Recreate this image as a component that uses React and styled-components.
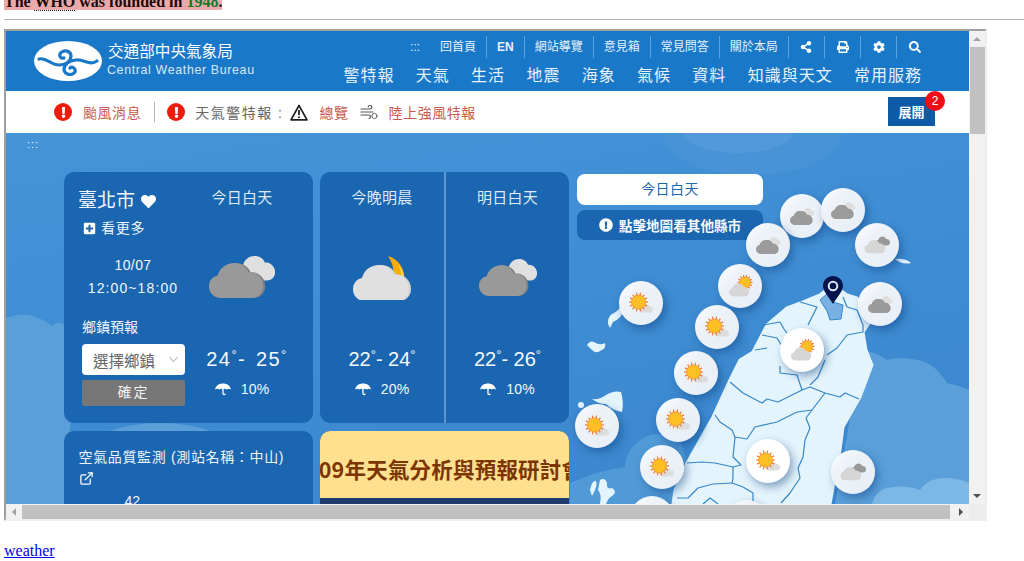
import React from "react";
import styled, { createGlobalStyle } from "styled-components";
import { FaShareAlt, FaPrint, FaCog, FaSearch, FaHeart, FaPlusSquare, FaExclamationCircle, FaExclamation } from "react-icons/fa";
import { FiExternalLink, FiChevronDown } from "react-icons/fi";

const SANS = `"Liberation Sans", "Noto Sans CJK TC", sans-serif`;

const Global = createGlobalStyle`
  html, body { margin: 0; padding: 0; background: #fff; overflow: hidden; }
  body { font-family: "Liberation Serif", serif; font-size: 16px; color: #000; }
`;

const Page = styled.div`
  width: 1024px;
  height: 561px;
  overflow: hidden;
  padding-left: 4px;
  box-sizing: border-box;
`;
const Fact = styled.p`
  margin: -7px 0 0;
  line-height: 18px;
  font-weight: 700;
  font-size: 16px;
`;
const Highlight = styled.span`
  background: #eba9a9;
  color: #1a0a0a;
`;
const Abbr = styled.span`
  border-bottom: 1px dotted #222;
`;
const Year = styled.span`
  color: #147a24;
`;
const Rule = styled.hr`
  margin: 8px 0 9px;
  border: 0;
  border-top: 1px solid #b4b4b4;
  height: 0;
`;
const Frame = styled.div`
  width: 983px;
  height: 492px;
  box-sizing: border-box;
  border: 2px solid;
  border-color: #a0a0a0 #efefef #efefef #a0a0a0;
  display: grid;
  grid-template-columns: 963px 16px;
  grid-template-rows: 473px 15px;
  font-family: ${SANS};
`;
const Viewport = styled.div`
  overflow: hidden;
  display: flex;
  flex-direction: column;
  background: #fff;
`;
const VBar = styled.div`
  background: #f1f1f1;
  display: flex;
  flex-direction: column;
  align-items: center;
`;
const HBar = styled.div`
  background: #f1f1f1;
  display: flex;
  align-items: center;
`;
const Corner = styled.div`
  background: #ececec;
`;
const VThumb = styled.div`
  width: 15px;
  height: 87px;
  background: #c1c1c1;
`;
const HThumb = styled.div`
  height: 14px;
  width: 928px;
  background: #c1c1c1;
`;
const ArrowBox = styled.div`
  width: 16px;
  height: ${(p) => (p.$flat ? "15px" : "16px")};
  display: flex;
  align-items: center;
  justify-content: center;
  flex: none;
`;
const Spacer = styled.div`
  flex: 1;
`;
const Tri = styled.i`
  width: 0;
  height: 0;
  border-style: solid;
  border-color: transparent;
  ${(p) => p.$d === "up" && "border-width: 0 4px 4px; border-bottom-color: #a3a3a3;"}
  ${(p) => p.$d === "down" && "border-width: 4px 4px 0; border-top-color: #505050;"}
  ${(p) => p.$d === "left" && "border-width: 4px 4px 4px 0; border-right-color: #a3a3a3;"}
  ${(p) => p.$d === "right" && "border-width: 4px 0 4px 4px; border-left-color: #505050;"}
`;

const Header = styled.header`
  height: 60px;
  flex: none;
  background: #1a78c9;
  display: flex;
  justify-content: space-between;
  padding: 0 48px 0 28px;
  color: #fff;
`;
const Brand = styled.div`
  display: flex;
  align-items: center;
  gap: 5px;
  height: 60px;
`;
const BrandText = styled.div`
  display: flex;
  flex-direction: column;
  margin-top: -1px;
`;
const BrandZh = styled.span`
  font-size: 15.6px;
  line-height: 20px;
  color: #fff;
  padding-left: 1px;
`;
const BrandEn = styled.span`
  font-size: 12.4px;
  line-height: 17px;
  letter-spacing: 0.65px;
  color: #d6e8f7;
`;
const NavColumn = styled.div`
  display: flex;
  flex-direction: column;
  align-items: flex-end;
  padding-top: 5px;
`;
const TopNav = styled.nav`
  display: flex;
  height: 22px;
  align-items: center;
`;
const TopItem = styled.span`
  height: 22px;
  line-height: 22px;
  display: flex;
  align-items: center;
  padding: 0 ${(p) => (p.$icon ? 11.6 : 10)}px;
  font-size: 12px;
  color: #e6f1fa;
  border-left: ${(p) => (p.$sep ? "1px solid #5da2dc" : "0")};
  font-weight: ${(p) => (p.$bold ? 700 : 400)};
  &:last-child { padding-right: 0; }
`;
const MainNav = styled.nav`
  display: flex;
  gap: 21.3px;
  margin-top: 6px;
`;
const MainItem = styled.span`
  font-size: 16px;
  line-height: 24px;
  letter-spacing: 1px;
  color: #e8f2fb;
  &:last-child { margin-right: -1px; }
`;

const AlertBar = styled.div`
  height: 42px;
  flex: none;
  background: #fff;
  display: flex;
  align-items: center;
  padding: 0 34px 0 48px;
`;
const AlertIcon = styled.span`
  width: 18px;
  height: 18px;
  border-radius: 50%;
  background: #ee1c0b;
  color: #fff;
  display: flex;
  align-items: center;
  justify-content: center;
  font-size: 11px;
  flex: none;
`;
const AlertText = styled.span`
  font-size: 14px;
  letter-spacing: ${(p) => (p.$muted ? 1.5 : 0.55)}px;
  margin-left: ${(p) => p.$ml ?? 11}px;
  color: ${(p) => (p.$muted ? "#666" : "#c9594c")};
`;
const VRule = styled.span`
  width: 1px;
  height: 20px;
  background: #b5b5b5;
  margin: 0 12px 0 13px;
`;
const Glyph = styled.svg`
  flex: none;
  margin-left: ${(p) => p.$ml ?? 11}px;
`;
const ExpandButton = styled.button`
  position: relative;
  margin-left: auto;
  width: 47px;
  height: 29px;
  margin-top: -1px;
  border: 0;
  background: #0d5aa7;
  color: #fff;
  font: 700 13px ${SANS};
  padding: 0;
`;
const Badge = styled.span`
  position: absolute;
  right: -10px;
  top: -6px;
  width: 20px;
  height: 20px;
  border-radius: 50%;
  background: #f00d17;
  color: #fff;
  font: 400 12px/20px ${SANS};
  text-align: center;
`;

const Main = styled.main`
  position: relative;
  flex: 1;
  overflow: hidden;
  background: linear-gradient(170deg, #4594d8 0%, #3f8dd3 45%, #3a86ce 100%);
  padding: 39px 0 0 58px;
  box-sizing: border-box;
`;
const Canvas = styled.svg`
  position: absolute;
  inset: 0;
`;
const Skip = styled.span`
  position: absolute;
  left: 21px;
  top: 5px;
  font-size: 11px;
  letter-spacing: 1px;
  color: #e5f0fa;
`;
const Board = styled.div`
  position: relative;
  z-index: 1;
  display: grid;
  grid-template-columns: 249px 249px 187px;
  grid-template-rows: 251px 120px;
  column-gap: 7px;
  row-gap: 8px;
`;
const Panel = styled.section`
  background: #1a66b0;
  border-radius: 10px;
  color: #fff;
`;
const TodayPanel = styled(Panel)`
  display: grid;
  grid-template-columns: 108px 110px;
  padding-left: 15px;
`;
const PairPanel = styled(Panel)`
  display: grid;
  grid-template-columns: 124px 1fr;
`;
const Info = styled.div`
  display: flex;
  flex-direction: column;
  padding-top: 15px;
`;
const City = styled.div`
  display: flex;
  align-items: center;
  gap: 6px;
  font-size: 19px;
  line-height: 28px;
  color: #f0f6fb;
  margin-left: -1px;
`;
const More = styled.div`
  display: flex;
  align-items: center;
  gap: 5px;
  font-size: 14px;
  line-height: 20px;
  letter-spacing: 0.7px;
  margin: 3px 0 0 4px;
  color: #eef5fb;
`;
const When = styled.div`
  font-size: 14px;
  line-height: 22px;
  letter-spacing: ${(p) => p.$ls ?? 0.4}px;
  text-align: center;
  margin-top: ${(p) => p.$mt}px;
  color: #f3f7fb;
  white-space: nowrap;
`;
const TownLabel = styled.div`
  font-size: 14px;
  line-height: 20px;
  margin: 18px 0 0 3px;
  color: #eef5fb;
`;
const TownSelect = styled.div`
  width: 103px;
  height: 31px;
  margin: 7px 0 0 3px;
  background: #fff;
  border-radius: 4px;
  display: flex;
  align-items: center;
  justify-content: space-between;
  padding: 0 4px 0 11px;
  box-sizing: border-box;
  color: #666;
  font-size: 15.5px;
`;
const Confirm = styled.div`
  width: 103px;
  height: 26px;
  margin: 5px 0 0 3px;
  background: #777;
  border-radius: 2px;
  color: #f0f0f0;
  font-size: 14px;
  letter-spacing: 2px;
  line-height: 25px;
  text-align: center;
`;
const Column = styled.div`
  display: grid;
  grid-template-rows: 20px 139px 24px 20px;
  row-gap: 0;
  padding-top: 16px;
  justify-items: center;
  border-left: ${(p) => (p.$sep ? "2px solid #5b97d0" : "0")};
`;
const ColTitle = styled.div`
  font-size: 15px;
  line-height: 20px;
  color: #dfeaf5;
  letter-spacing: 0.3px;
`;
const IconSlot = styled.div`
  display: flex;
  align-items: center;
  justify-content: center;
`;
const Temp = styled.div`
  font-size: 20px;
  line-height: 24px;
  white-space: nowrap;
  color: #f5f9fc;
  letter-spacing: ${(p) => (p.$wide ? 1.4 : 0)}px;
  word-spacing: ${(p) => (p.$wide ? 3 : 0)}px;
  margin-left: ${(p) => (p.$wide ? 10 : 0)}px;
`;
const Deg = styled.span`
  font-size: 13px;
  position: relative;
  top: -7px;
  line-height: 0;
`;
const Rain = styled.div`
  display: flex;
  align-items: center;
  gap: 10px;
  font-size: 14px;
  line-height: 20px;
  margin-top: 16px;
  color: #f5f9fc;
  letter-spacing: 0.2px;
`;
const AirPanel = styled(Panel)`
  padding: 16px 15px 0 14.5px;
  font-size: 14px;
  line-height: 20px;
  overflow: hidden;
  color: #eef5fb;
`;
const AirTitle = styled.div`
  letter-spacing: 0.65px;
  white-space: nowrap;
`;
const AirLink = styled.div`
  height: 20px;
  margin-top: 1px;
  display: flex;
  align-items: center;
`;
const AirValue = styled.div`
  margin: 3px 0 0 46px;
  line-height: 20px;
`;
const Banner = styled.section`
  border-radius: 10px 10px 0 0;
  overflow: hidden;
  background: #1f3a6f;
`;
const BannerHead = styled.div`
  height: 67px;
  background: #ffe08f;
  display: flex;
  align-items: center;
  justify-content: center;
  overflow: hidden;
  padding-top: 7px;
  box-sizing: border-box;
`;
const BannerText = styled.span`
  flex: none;
  white-space: nowrap;
  color: #7b3503;
  letter-spacing: 0.2px;
  font: 700 21.5px "Noto Sans CJK TC", "Liberation Sans", sans-serif;
`;
const MapControls = styled.div`
  display: flex;
  flex-direction: column;
  gap: 5px;
  margin: 2px 0 0 1px;
`;
const PeriodPill = styled.div`
  height: 31px;
  border-radius: 8px;
  background: #fff;
  color: #1a66b0;
  font-size: 14px;
  line-height: 30px;
  letter-spacing: 0.4px;
  text-align: center;
`;
const HintPill = styled.div`
  height: 30px;
  border-radius: 8px;
  background: #1a66b0;
  color: #f5f9fc;
  font-size: 13.6px;
  font-weight: 700;
  display: flex;
  align-items: center;
  justify-content: center;
  gap: 6px;
`;
const Pin = styled.div`
  position: absolute;
  z-index: 2;
  left: ${(p) => p.$x - 6 - 22}px;
  top: ${(p) => p.$y - 133 - 22}px;
  width: 44px;
  height: 44px;
  border-radius: 50%;
  background: ${(p) => (p.$on ? "#fff" : "linear-gradient(135deg, #fdfeff 0%, #edf2f8 35%, #e8eef6 100%)")};
  box-shadow: 3px 4px 9px rgba(10, 60, 120, 0.45);
`;
const Marker = styled.svg`
  position: absolute;
  z-index: 3;
  left: 817px;
  top: 143px;
`;
const Footer = styled.p`
  margin: 21px 0 0;
  line-height: 18px;
`;
const Anchor = styled.a`
  color: #0000ee;
  text-decoration: underline;
`;

const CLOUD = "M12 36C5 36 0 31 0 24C0 18 4 14 9 13C11 5 18 0 26 0C33 0 39 4 41 10C44 9 47 10 50 12C54 15 56 19 56 24C56 31 51 36 44 36Z";

const Cloud = ({ x, y, s, fill, edge }) => (
  <g transform={`translate(${x} ${y}) scale(${s})`}>
    {edge && <path d={CLOUD} fill={edge} transform="translate(2 0)" />}
    <path d={CLOUD} fill={fill} />
  </g>
);

const Sun = ({ cx, cy, r }) => (
  <g>
    {Array.from({ length: 14 }, (_, i) => {
      const a = (i / 14) * Math.PI * 2;
      return (
        <line
          key={i}
          x1={cx + Math.cos(a) * r}
          y1={cy + Math.sin(a) * r}
          x2={cx + Math.cos(a) * (r + r * 0.36)}
          y2={cy + Math.sin(a) * (r + r * 0.36)}
          stroke="#ef7a2c"
          strokeWidth="1.2"
        />
      );
    })}
    <circle cx={cx} cy={cy} r={r} fill="#fdbf24" stroke="#f08a2c" strokeWidth="0.8" />
  </g>
);

const PinIcon = ({ kind }) => (
  <svg width="44" height="44" viewBox="0 0 44 44">
    {kind === "cloudy" && (
      <>
        <Cloud x={22} y={14} s={0.22} fill="#dedede" />
        <Cloud x={10} y={17} s={0.39} fill="#9b9b9b" edge="#8c8c8c" />
      </>
    )}
    {kind === "light" && (
      <>
        <Cloud x={21} y={13.5} s={0.25} fill="#999" />
        <Cloud x={9.5} y={17} s={0.37} fill="#d6d6d6" />
      </>
    )}
    {kind === "sun" && (
      <>
        <Cloud x={20} y={22.5} s={0.25} fill="#dcdcdc" />
        <Sun cx={19.5} cy={21} r={7} />
      </>
    )}
    {kind === "partly" && (
      <>
        <Sun cx={27} cy={18.5} r={5.5} />
        <Cloud x={11} y={19.5} s={0.36} fill="#d6d6d6" />
      </>
    )}
  </svg>
);

const CloudyBig = ({ w, h }) => (
  <svg width={w} height={h} viewBox="0 0 66 43">
    <Cloud x={28} y={0} s={0.68} fill="#e0e0e0" />
    <Cloud x={0} y={7} s={0.97} fill="#999" edge="#7e7e7e" />
  </svg>
);

const MoonBig = () => (
  <svg width="58" height="44" viewBox="0 0 58 44">
    <path d="M35 0C46 3 53 14 51 26L41 24C41 15 40 7 35 0Z" fill="#f9ad0a" />
    <path d="M45 8C50 14 52 20 51 26L48 26C49 20 48 14 45 8Z" fill="#ffd24d" />
    <Cloud x={0} y={9} s={1} fill="#e0e0e0" edge="#d2d2d2" />
  </svg>
);

const Umbrella = () => (
  <svg width="16" height="13" viewBox="0 0 16 13">
    <path d="M0 6.5C1 2.5 4 0.5 8 0.5S15 2.5 16 6.5C14.5 5.4 13 5.4 11.8 6.5C10.5 5.4 9 5.4 8 6.5C7 5.4 5.5 5.4 4.2 6.5C3 5.4 1.5 5.4 0 6.5Z" fill="#fff" />
    <path d="M8 6V10.5C8 12 10 12 10.2 10.6" fill="none" stroke="#fff" strokeWidth="1.3" />
  </svg>
);

const Degree = () => <Deg>°</Deg>;

const Forecast = ({ title, low, high, rain, sep, wide, children }) => (
  <Column $sep={sep}>
    <ColTitle>{title}</ColTitle>
    <IconSlot>{children}</IconSlot>
    <Temp $wide={wide}>
      {low}
      <Degree />- {high}
      <Degree />
    </Temp>
    <Rain>
      <Umbrella />
      {rain}
    </Rain>
  </Column>
);

const Logo = () => (
  <svg width="68" height="40" viewBox="0 0 68 40">
    <ellipse cx="34" cy="20" rx="34" ry="20" fill="#fff" />
    <g fill="none" stroke="#1a78c9" strokeWidth="3.2" strokeLinecap="round">
      <path d="M5 18C12 16 17 24 25 24C31 24 37 21 37 15C37 10 30 8 26.5 12C24.5 15 27 18 30 17" />
      <path d="M63 20C56 25 50 18 42 19C35 20 30 23 30 29C31 34 38 35 41 31C42 27 38 25 36 27" />
    </g>
  </svg>
);

const WarnIcon = () => (
  <Glyph $ml={7} width="18" height="17" viewBox="0 0 18 17">
    <path d="M9 1.5L17 15.8H1Z" fill="none" stroke="#222" strokeWidth="1.7" strokeLinejoin="round" />
    <path d="M9 6V11" stroke="#222" strokeWidth="1.8" />
    <circle cx="9" cy="13.2" r="1" fill="#222" />
  </Glyph>
);

const WindIcon = () => (
  <Glyph width="18" height="16" viewBox="0 0 18 16">
    <g fill="none" stroke="#555" strokeWidth="1.2" strokeLinecap="round">
      <path d="M1 5H10C12.5 5 12.5 1.5 10 1.5C9 1.5 8.4 2 8.2 2.8" />
      <path d="M1 8H13" />
      <path d="M1 11H9C11 11 11 14.5 9 14.5" />
      <circle cx="14.5" cy="12" r="2.6" strokeWidth="0.9" />
    </g>
  </Glyph>
);

const pins = [
  [802, 216, "cloudy"], [843, 210, "cloudy"], [877, 245, "light"], [768, 245, "cloudy"],
  [740, 286, "partly"], [641, 303, "sun"], [717, 327, "sun"], [880, 304, "cloudy"],
  [802, 350, "partly", true], [696, 373, "sun"], [678, 420, "sun"], [597, 426, "sun"],
  [662, 467, "sun"], [768, 461, "sun", true], [853, 472, "light"], [652, 518, "sun"], [747, 522, "sun"],
];

const lines = [
  "730,382 743,393 762,403 767,399 778,402 802,390 810,387 825,393 840,397 845,393 859,399",
  "825,393 812,410 797,412 777,422 755,427 747,439 735,437 732,430 720,422 715,415",
  "812,410 806,418 810,428 805,440 803,457 798,468 800,478 790,493 781,503",
  "735,437 733,457 741,465 733,467 715,463 702,462 687,463",
  "733,467 733,478 732,483 743,487 753,493 753,503",
  "732,483 713,484 698,488 688,498 677,498",
  "703,504 710,498 718,504",
  "802,390 797,375 780,373 780,366",
  "763,325 780,322 784,329 787,333",
  "762,335 777,338 782,346",
  "755,350 767,348",
  "800,302 817,307 808,325",
  "843,297 847,307 857,310 863,325 863,332 847,335 837,348 827,355",
  "825,360 818,377 810,385",
];

const top = ["回首頁", "EN", "網站導覽", "意見箱", "常見問答", "關於本局"];
const nav = ["警特報", "天氣", "生活", "地震", "海象", "氣候", "資料", "知識與天文", "常用服務"];

export default function App() {
  return (
    <>
      <Global />
      <Page>
        <Fact>
          <Highlight>
            The <Abbr>WHO</Abbr> was founded in <Year>1948</Year>.
          </Highlight>
        </Fact>
        <Rule />
        <Frame>
          <Viewport>
            <Header>
              <Brand>
                <Logo />
                <BrandText>
                  <BrandZh>交通部中央氣象局</BrandZh>
                  <BrandEn>Central Weather Bureau</BrandEn>
                </BrandText>
              </Brand>
              <NavColumn>
                <TopNav>
                  <TopItem>:::</TopItem>
                  {top.map((t, i) => (
                    <TopItem key={t} $sep={i > 0} $bold={t === "EN"}>{t}</TopItem>
                  ))}
                  <TopItem $sep $icon><FaShareAlt size={12} color="#fff" /></TopItem>
                  <TopItem $sep $icon><FaPrint size={12} color="#fff" /></TopItem>
                  <TopItem $sep $icon><FaCog size={12} color="#fff" /></TopItem>
                  <TopItem $sep $icon><FaSearch size={12} color="#fff" /></TopItem>
                </TopNav>
                <MainNav>
                  {nav.map((t) => <MainItem key={t}>{t}</MainItem>)}
                </MainNav>
              </NavColumn>
            </Header>
            <AlertBar>
              <AlertIcon><FaExclamation /></AlertIcon>
              <AlertText>颱風消息</AlertText>
              <VRule />
              <AlertIcon><FaExclamation /></AlertIcon>
              <AlertText $muted $ml={10}>天氣警特報 :</AlertText>
              <WarnIcon />
              <AlertText>總覽</AlertText>
              <WindIcon />
              <AlertText>陸上強風特報</AlertText>
              <ExpandButton>
                展開
                <Badge>2</Badge>
              </ExpandButton>
            </AlertBar>
            <Main>
              <Canvas width="963" height="371" viewBox="6 133 963 371">
                <ellipse cx="752" cy="133" rx="90" ry="42" fill="#4793d6" />
                <ellipse cx="738" cy="131" rx="56" ry="22" fill="#5199da" />
                <path d="M6 318Q30 308 52 326Q60 318 70 330L70 504H6Z" fill="#5a9fd9" />
                <ellipse cx="160" cy="455" rx="75" ry="32" fill="#5a9fd9" />
                <path d="M570 483Q600 470 625 467Q626 445 650 435Q662 432 680 440L700 504H570Z" fill="#509ad8" />
                <path d="M862 350Q876 352 887 360Q900 356 917 360Q934 362 947 383Q958 385 969 390V504H835Z" fill="#5a9fd9" />
                <path d="M872 504Q876 490 887 488Q905 484 920 490Q928 478 945 478Q958 478 969 483V504Z" fill="#7db7e6" />
                <path
                  d="M753 352L767 325L787 308L803 302L820 295L833 285L847 295L857 298L870 322L863 332L866 350L872 365L860 397L843 427L840 450L830 504H673L675 490L687 463L713 417L730 380L740 360Z"
                  fill="#e3f4fc"
                  stroke="#e3f4fc"
                  strokeWidth="3"
                  strokeLinejoin="round"
                />
                <path d="M820 300L828 293L833 302L843 305L841 319L830 320L827 311Z" fill="#79b0e4" stroke="#3586c8" strokeWidth="1" />
                {lines.map((l) => (
                  <polyline key={l} points={l} fill="none" stroke="#3586c8" strokeWidth="1.2" strokeLinejoin="round" />
                ))}
                <g fill="#e3f4fc">
                  <path d="M608 324Q607 316 614 313Q619 310 620 307L624 309Q622 318 613 322L610 328Z" />
                  <path d="M587 345Q590 340 594 342Q600 346 605 343Q607 348 600 351Q596 354 592 350Z" />
                  <path d="M592 399Q600 400 606 395Q614 390 621 392Q624 402 622 412Q612 410 606 404Q598 404 592 399Z" />
                  <circle cx="581" cy="405" r="3" />
                  <path d="M590 490Q592 480 596 481Q598 486 592 496ZM600 480Q605 477 607 483Q606 490 612 488Q618 492 612 496Q608 498 606 504H600Q602 494 598 490Z" />
                  <path d="M895 259Q905 258 911 263Q902 265 895 259Z" />
                </g>
              </Canvas>
              <Skip>:::</Skip>
              <Board>
                <TodayPanel>
                  <Info>
                    <City>臺北市 <FaHeart size={15} color="#fff" /></City>
                    <More><FaPlusSquare size={13} color="#fff" />看更多</More>
                    <When $mt={16}>10/07</When>
                    <When $mt={1} $ls={1.1}>12:00~18:00</When>
                    <TownLabel>鄉鎮預報</TownLabel>
                    <TownSelect>選擇鄉鎮<FiChevronDown size={15} color="#c4c4c4" /></TownSelect>
                    <Confirm>確定</Confirm>
                  </Info>
                  <Forecast title="今日白天" low="24" high="25" rain="10%" wide>
                    <CloudyBig w={66} h={43} />
                  </Forecast>
                </TodayPanel>
                <PairPanel>
                  <Forecast title="今晚明晨" low="22" high="24" rain="20%">
                    <MoonBig />
                  </Forecast>
                  <Forecast title="明日白天" low="22" high="26" rain="10%" sep>
                    <CloudyBig w={58} h={38} />
                  </Forecast>
                </PairPanel>
                <MapControls>
                  <PeriodPill>今日白天</PeriodPill>
                  <HintPill><FaExclamationCircle size={14} color="#fff" />點擊地圖看其他縣市</HintPill>
                </MapControls>
                <AirPanel>
                  <AirTitle>空氣品質監測 (測站名稱：中山)</AirTitle>
                  <AirLink><FiExternalLink size={15} color="#fff" /></AirLink>
                  <AirValue>42</AirValue>
                </AirPanel>
                <Banner>
                  <BannerHead>
                    <BannerText>109年天氣分析與預報研討會</BannerText>
                  </BannerHead>
                </Banner>
              </Board>
              {pins.map(([x, y, kind, on]) => (
                <Pin key={`${x}-${y}`} $x={x} $y={y} $on={on}>
                  <PinIcon kind={kind} />
                </Pin>
              ))}
              <Marker width="20" height="28" viewBox="0 0 20 28">
                <path d="M10 0C4.5 0 0 4.3 0 9.8C0 15 5 20 10 28C15 20 20 15 20 9.8C20 4.3 15.5 0 10 0Z" fill="#02134d" />
                <circle cx="10" cy="10" r="4.3" fill="none" stroke="#dfe8f4" strokeWidth="2" />
              </Marker>
            </Main>
          </Viewport>
          <VBar>
            <ArrowBox><Tri $d="up" /></ArrowBox>
            <VThumb />
            <Spacer />
            <ArrowBox><Tri $d="down" /></ArrowBox>
          </VBar>
          <HBar>
            <ArrowBox $flat><Tri $d="left" /></ArrowBox>
            <HThumb />
            <Spacer />
            <ArrowBox $flat><Tri $d="right" /></ArrowBox>
          </HBar>
          <Corner />
        </Frame>
        <Footer>
          <Anchor href="#">weather</Anchor>
        </Footer>
      </Page>
    </>
  );
}
